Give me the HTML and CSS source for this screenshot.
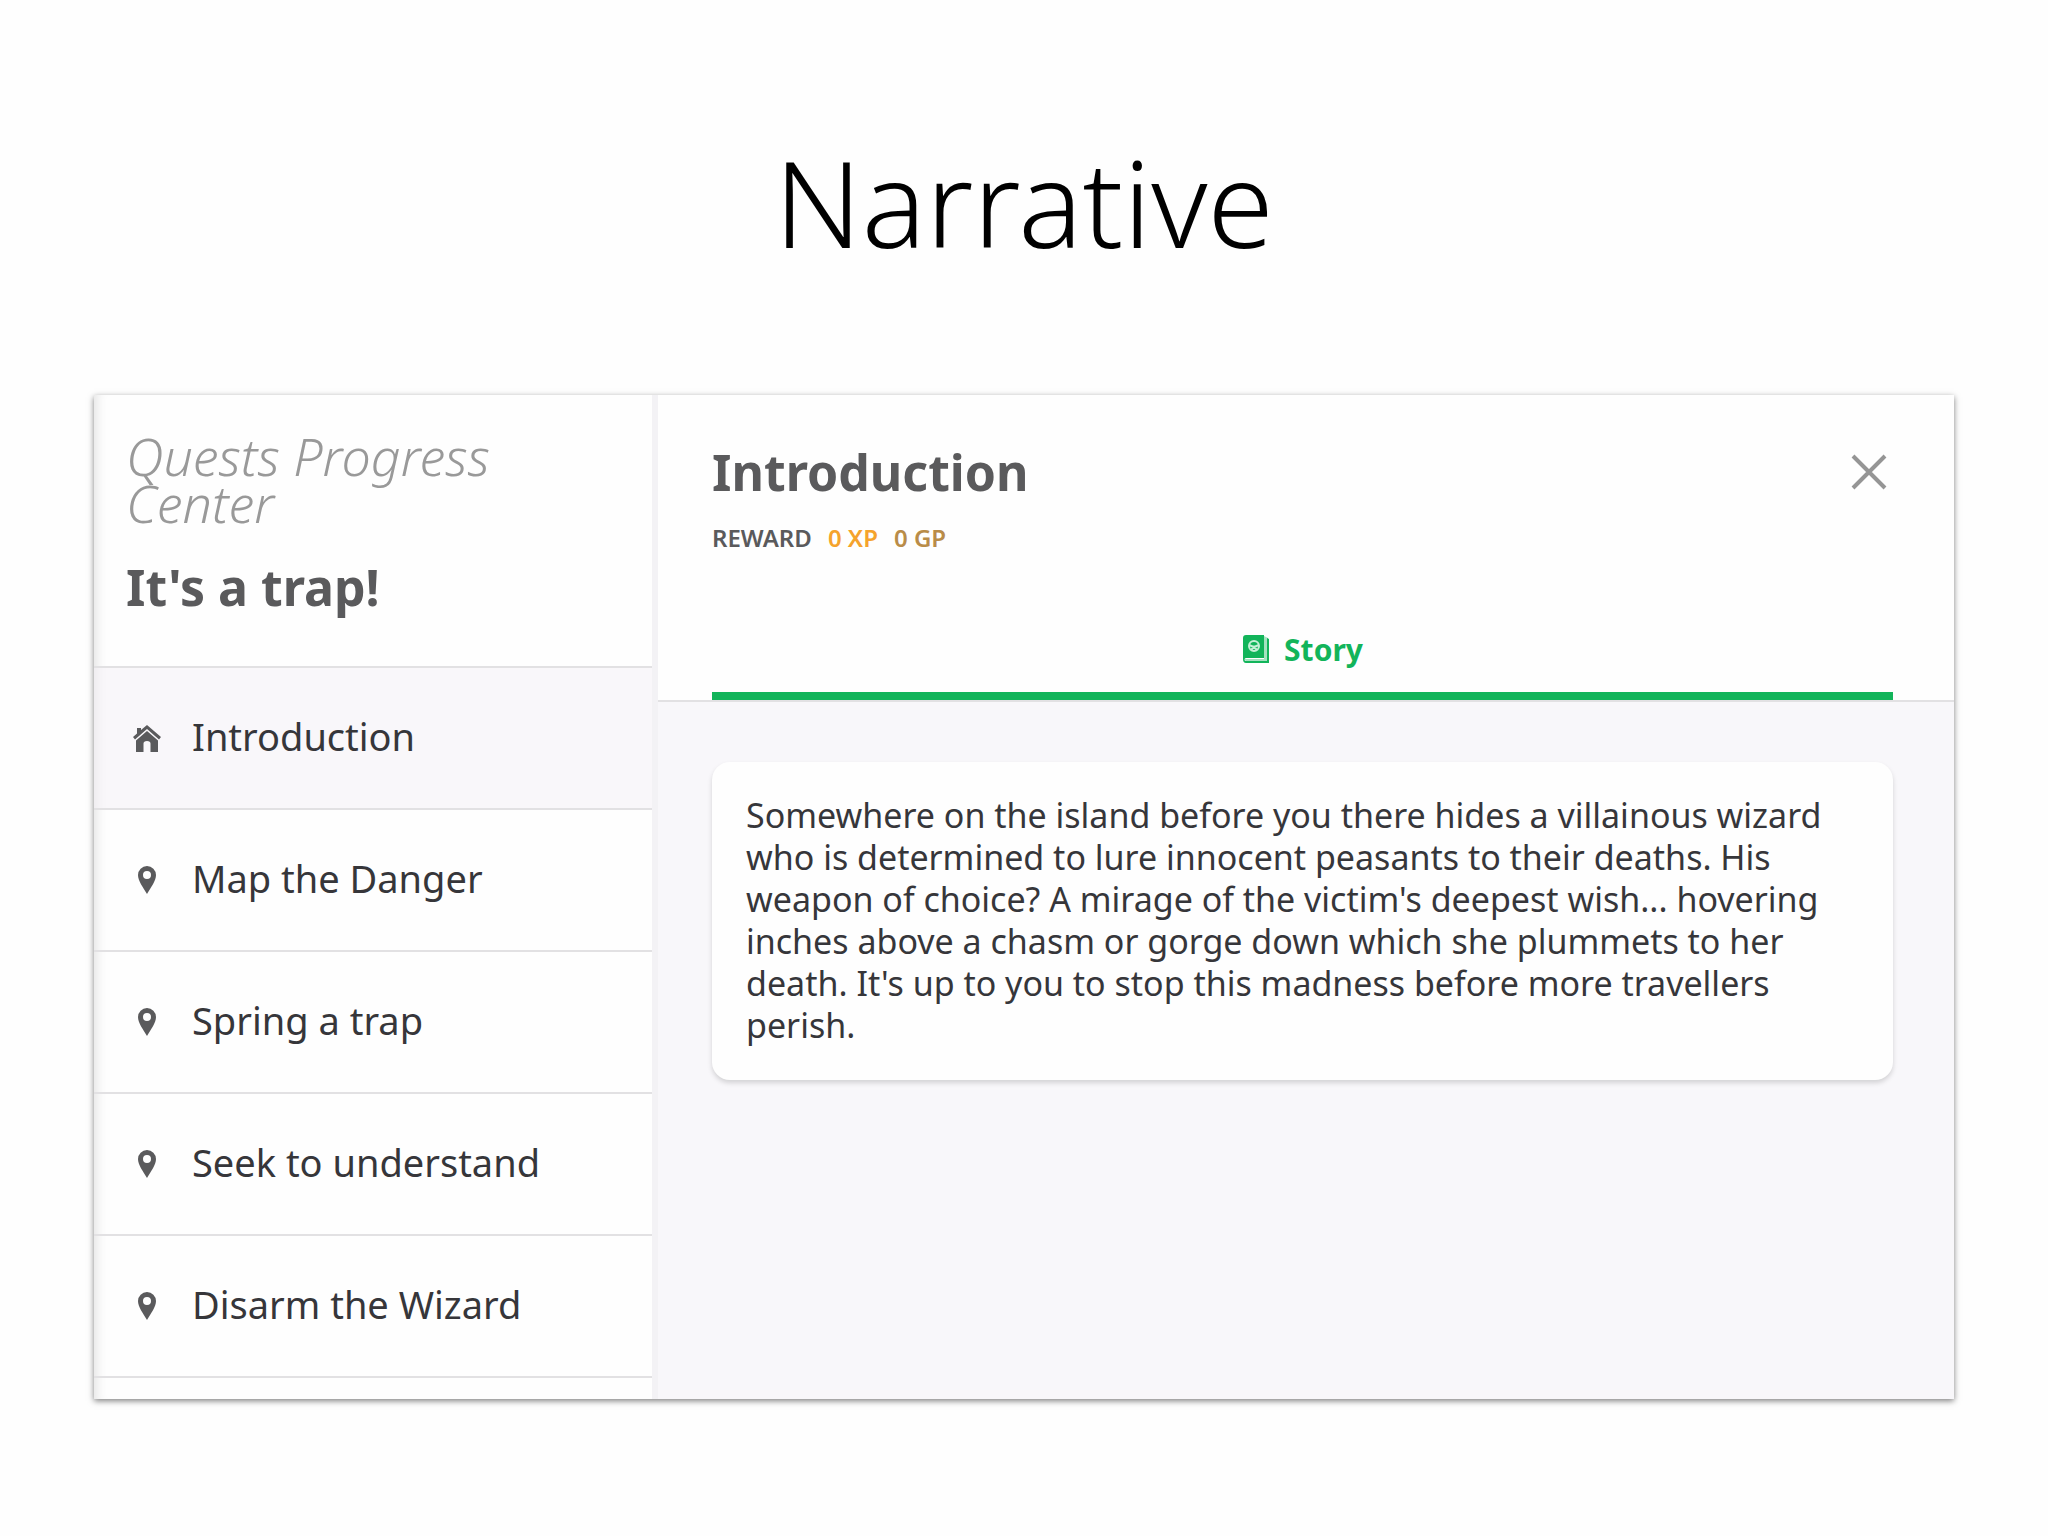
FILE: index.html
```html
<!DOCTYPE html>
<html lang="en">
<head>
    <meta charset="UTF-8">
    <meta name="viewport" content="width=device-width, initial-scale=1.0">
    <title>Narrative</title>
    <link rel="stylesheet" href="styles.css">
</head>
<body>
    <h1 class="page-title">Narrative</h1>

    <div class="window">
        <aside class="sidebar">
            <div class="sidebar-header">
                <p class="app-name">Quests Progress Center</p>
                <h2 class="heading">It's a trap!</h2>
            </div>
            <nav>
                <a href="#introduction" class="step active">
                    <svg class="step-icon" viewBox="0 0 28 28">
                        <path d="M14 1 L8 6 V4 H4 V9.500 L0 13 L2 15.500 L14 5 L26 15.500 L28 13 Z"/>
                        <path d="M14 7 L25 16.500 V28 H17.500 V19.500 Q17.500 17 14 17 Q10.500 17 10.500 19.500 V28 H3 V16.500 Z"/>
                    </svg>
                    Introduction
                </a>
                <a href="#map" class="step">
                    <svg class="step-icon" viewBox="0 0 28 28">
                        <path fill-rule="evenodd" d="M14 0 A9 9 0 0 0 5 9 C5 15 10 21 14 28 C18 21 23 15 23 9 A9 9 0 0 0 14 0 Z M14 5 A4 4 0 1 1 14 13 A4 4 0 1 1 14 5 Z"/>
                    </svg>
                    Map the Danger
                </a>
                <a href="#spring" class="step">
                    <svg class="step-icon" viewBox="0 0 28 28">
                        <path fill-rule="evenodd" d="M14 0 A9 9 0 0 0 5 9 C5 15 10 21 14 28 C18 21 23 15 23 9 A9 9 0 0 0 14 0 Z M14 5 A4 4 0 1 1 14 13 A4 4 0 1 1 14 5 Z"/>
                    </svg>
                    Spring a trap
                </a>
                <a href="#seek" class="step">
                    <svg class="step-icon" viewBox="0 0 28 28">
                        <path fill-rule="evenodd" d="M14 0 A9 9 0 0 0 5 9 C5 15 10 21 14 28 C18 21 23 15 23 9 A9 9 0 0 0 14 0 Z M14 5 A4 4 0 1 1 14 13 A4 4 0 1 1 14 5 Z"/>
                    </svg>
                    Seek to understand
                </a>
                <a href="#disarm" class="step">
                    <svg class="step-icon" viewBox="0 0 28 28">
                        <path fill-rule="evenodd" d="M14 0 A9 9 0 0 0 5 9 C5 15 10 21 14 28 C18 21 23 15 23 9 A9 9 0 0 0 14 0 Z M14 5 A4 4 0 1 1 14 13 A4 4 0 1 1 14 5 Z"/>
                    </svg>
                    Disarm the Wizard
                </a>
            </nav>
        </aside>

        <main class="content">
            <header class="content-header">
                <div class="title-row">
                    <h2 class="heading">Introduction</h2>
                    <button class="close-button" aria-label="Close">
                        <svg viewBox="0 0 36 36">
                            <path d="M2 2 L34 34 M34 2 L2 34"/>
                        </svg>
                    </button>
                </div>
                <p class="reward">
                    <span>REWARD</span>
                    <span class="xp">0 XP</span>
                    <span class="gp">0 GP</span>
                </p>
                <button class="tab">
                    <svg class="tab-icon" viewBox="0 0 28 28">
                        <path class="pages" d="M22 1 L26 3 V27 H5 L2 24 H22 Z"/>
                        <path d="M4 0 H22 V23 H4 Q2.500 23 2.500 24.500 Q2.500 26 4 26 H25 V3 L27 4 V28 H4 Q1 28 1 24 V3 Q1 0 4 0 Z"/>
                        <circle class="emblem" cx="12" cy="11" r="5"/>
                        <path class="emblem" d="M7 10 L12 12 L17 10 M9 15 L12 12 L15 15"/>
                    </svg>
                    Story
                </button>
            </header>
            <section class="story">
                <p class="story-card">
                    Somewhere on the island before you there hides a villainous wizard<br>
                    who is determined to lure innocent peasants to their deaths. His<br>
                    weapon of choice? A mirage of the victim's deepest wish... hovering<br>
                    inches above a chasm or gorge down which she plummets to her<br>
                    death. It's up to you to stop this madness before more travellers<br>
                    perish.
                </p>
            </section>
        </main>
    </div>
</body>
</html>
```

FILE: styles.css
```css
* {
    box-sizing: border-box;
}

body {
    margin: 0;
    padding: 130px 94px;
    font-family: "Noto Sans", "Open Sans", sans-serif;
    color: #36363a;
    background-color: #fefefe;
}

h1, h2, p {
    margin: 0;
}

.page-title {
    margin-bottom: 121px;
    font-size: 120px;
    font-weight: 300;
    line-height: 144px;
    text-align: center;
    color: #000;
}

.window {
    display: flex;
    background-color: #fefefe;
    box-shadow: 0 2px 6px rgba(0, 0, 0, 0.5);
}

.sidebar {
    flex: 0 0 30%;
    padding-bottom: 21px;
    box-shadow: inset 12px 0 12px -10px rgba(0, 0, 0, 0.12);
}

.sidebar-header {
    padding: 37px 32px 39px;
}

.app-name {
    margin-bottom: 21px;
    font-size: 52px;
    font-style: italic;
    font-weight: 300;
    line-height: 47px;
    color: #999;
}

.heading {
    font-size: 50px;
    font-weight: 700;
    line-height: 80px;
    color: #5a5a5c;
}

.step {
    display: flex;
    align-items: center;
    gap: 31px;
    height: 142px;
    padding: 0 39px 4px;
    border-top: 2px solid #e2e1e3;
    font-size: 38px;
    color: #36363a;
    text-decoration: none;
}

.step:last-child {
    height: 144px;
    border-bottom: 2px solid #e2e1e3;
}

.step.active {
    background-color: rgba(243, 240, 246, 0.5);
}

.step-icon {
    width: 28px;
    height: 28px;
    margin-top: 4px;
    fill: #5a5a5c;
}

.content {
    flex: 1;
    border-left: 6px solid #f3f2f5;
    background-color: #f8f7fa;
}

.content-header {
    padding: 37px 61px 0 54px;
    border-bottom: 2px solid #e2e1e3;
    background-color: #fefefe;
}

.title-row {
    display: flex;
    align-items: center;
    justify-content: space-between;
}

.close-button {
    width: 48px;
    height: 48px;
    padding: 6px;
    border: none;
    background: none;
    cursor: pointer;
}

.close-button svg {
    display: block;
    stroke: #959595;
    stroke-width: 4;
}

.reward {
    display: flex;
    gap: 16px;
    margin-bottom: 57px;
    font-size: 24px;
    font-weight: 600;
    line-height: 51px;
    color: #5a5a5c;
}

.xp {
    color: #f5a32c;
}

.gp {
    color: #b98c48;
}

.tab {
    display: flex;
    align-items: center;
    justify-content: center;
    gap: 14px;
    width: 100%;
    height: 80px;
    padding: 0 0 14px;
    border: none;
    border-bottom: 8px solid #12b45a;
    background: none;
    font-family: inherit;
    font-size: 30px;
    font-weight: 700;
    color: #12b45a;
    cursor: pointer;
}

.tab-icon {
    width: 28px;
    height: 28px;
    fill: #12b45a;
}

.tab-icon .pages {
    fill: #a5e2c0;
}

.tab-icon .emblem {
    fill: none;
    stroke: #c4f0d6;
    stroke-width: 2;
}

.story {
    padding: 60px 61px 60px 54px;
}

.story-card {
    padding: 32px 32px 34px 34px;
    border-radius: 18px;
    background-color: #fefefe;
    box-shadow: 0 3px 5px rgba(0, 0, 0, 0.15);
    font-size: 34px;
    line-height: 42px;
}
```
